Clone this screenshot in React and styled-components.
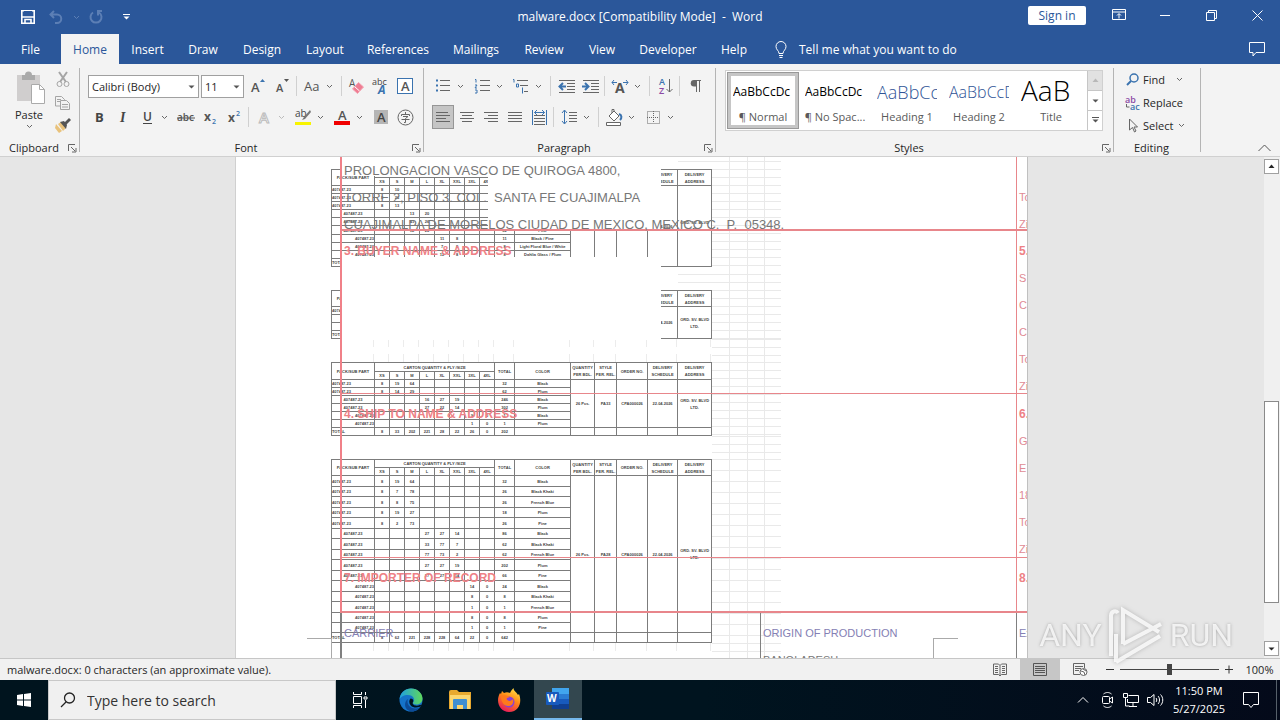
import React from "react";
import styled, { createGlobalStyle, css } from "styled-components";

const BLUE = "#2b579a";
const UI = `"Open Sans", "Noto Sans", sans-serif`;

const GlobalStyle = createGlobalStyle`
  * { box-sizing: border-box; }
  html, body { margin: 0; padding: 0; overflow: hidden; }
  body { font-family: ${UI}; font-size: 11px; color: #262626; }
  button, input, select { font: inherit; color: inherit; margin: 0; padding: 0; border: 0; background: none; }
  button { cursor: default; display: inline-flex; align-items: center; justify-content: center; }
  svg { display: block; flex: none; overflow: visible; }
`;

const App_ = styled.div`
  display: flex;
  flex-direction: column;
  height: 100vh;
  min-width: 1230px;
`;

/* ---------- title bar ---------- */
const TitleBar = styled.header`
  display: grid;
  grid-template-columns: 1fr auto 1fr;
  height: 34px;
  background: ${BLUE};
  color: #fff;
`;
const QuickAccess = styled.div`
  display: flex;
  align-items: center;
  padding-left: 16px;
`;
const QuickButton = styled.button`
  width: ${(p) => p.$w}px;
  height: 24px;
  color: ${(p) => (p.$dim ? "#5c7fb5" : "#fff")};
`;
const Title = styled.h1`
  margin: 0;
  font-size: 12px;
  font-weight: 400;
  line-height: 34px;
  white-space: pre;
`;
const WindowControls = styled.div`
  display: flex;
  justify-content: flex-end;
  height: 30px;
`;
const SignIn = styled.button`
  width: 58px;
  height: 19px;
  margin: 6px 10px 0 0;
  border-radius: 2px;
  background: #fff;
  color: ${BLUE};
  font-size: 12px;
`;
const WindowButton = styled.button`
  width: 46px;
  height: 30px;
  color: #fff;
`;

/* ---------- tabs ---------- */
const TabBar = styled.nav`
  display: flex;
  height: 30px;
  background: ${BLUE};
  color: #fff;
  font-size: 12px;
`;
const Tab = styled.button`
  width: ${(p) => p.$w}px;
  height: 30px;
  ${(p) => p.$active && css`background: #f3f3f3; color: ${BLUE};`}
`;
const TellMe = styled.button`
  gap: 12px;
  padding-left: 15px;
`;
const CommentButton = styled.button`
  width: 46px;
  margin-left: auto;
`;

/* ---------- ribbon ---------- */
const Ribbon = styled.section`
  display: flex;
  height: 93px;
  padding: 4px 0 0;
  background: #f3f3f3;
  border-bottom: 1px solid #d0d0d0;
`;
const Group = styled.div`
  display: flex;
  flex-direction: column;
  width: ${(p) => p.$w}px;
  height: 88px;
  background: linear-gradient(#b4b4b4 0 0) right top / 1px 84px no-repeat;
`;
const GroupBody = styled.div`
  display: flex;
  flex-direction: ${(p) => (p.$row ? "row" : "column")};
  gap: ${(p) => p.$gap || 0}px;
  flex: 1;
  padding: ${(p) => p.$pad};
`;
const GroupFoot = styled.div`
  display: grid;
  grid-template-columns: 4px 1fr 16px;
  height: 16px;
  align-items: center;
  text-align: center;
  font-size: 11px;
  line-height: 16px;
`;
const FootLabel = styled.span`
  grid-column: 2;
`;
const ToolRow = styled.div`
  display: flex;
  align-items: center;
  height: 24px;
`;
const Tool = styled.button`
  width: 24px;
  height: 24px;
  flex: none;
  ${(p) => p.$on && css`background: #c5c5c5; border: 1px solid #969696; width: 22px; height: 24px; margin: 0 1px;`}
`;
const CaretButton = styled.button`
  width: ${(p) => p.$w || 15}px;
  height: 24px;
  padding-right: 4px;
  flex: none;
`;
const Divider = styled.span`
  width: 1px;
  height: 20px;
  margin: 0 3px 0 2px;
  background: #d0d0d0;
`;
const PasteButton = styled.button`
  flex-direction: column;
  justify-content: flex-start;
  width: 56px;
  line-height: 18px;
  padding-top: 2px;
`;
const ClipColumn = styled.div`
  display: flex;
  flex-direction: column;
  margin-left: -2px;
`;
const ClipButton = styled.button`
  width: 16px;
  height: 23px;
`;
const Combo = styled.label`
  position: relative;
  display: flex;
  width: ${(p) => p.$w}px;
  height: 23px;
  margin: 0 ${(p) => p.$mr}px 0 1px;
  border: 1px solid #a0a0a0;
  background: #fff;
  select {
    flex: 1;
    min-width: 0;
    padding-left: 3px;
    appearance: none;
    font-size: 11px;
    outline: 0;
  }
  svg {
    position: absolute;
    right: 3px;
    top: 7px;
    color: #555;
    pointer-events: none;
  }
`;
const Gallery = styled.div`
  display: flex;
  width: 378px;
  height: 61px;
  padding-left: 1px;
  border: 1px solid #d0d0d0;
  background: #fff;
`;
const StyleCard = styled.button`
  flex-direction: column;
  justify-content: flex-start;
  width: 72px;
  height: 57px;
  margin-top: 1px;
  outline: ${(p) => (p.$on ? "1px solid #999" : "0")};
  outline-offset: -1px;
  box-shadow: ${(p) => (p.$on ? "inset 0 0 0 4px #c6c6c6" : "none")};
`;
const Sample = styled.span`
  width: 60px;
  height: 34px;
  margin-top: 2px;
  overflow: hidden;
  line-height: ${(p) => (p.$size > 20 ? 32 : 36)}px;
  white-space: nowrap;
  text-align: left;
  font-size: ${(p) => p.$size}px;
  font-weight: ${(p) => (p.$size > 12 ? 300 : 400)};
  color: ${(p) => p.$color};
`;
const StyleName = styled.span`
  color: #5a5a5a;
  font-size: 11px;
  line-height: 18px;
  white-space: nowrap;
`;
const GalleryScroll = styled.div`
  display: flex;
  flex-direction: column;
  width: 15px;
  margin-left: auto;
  border-left: 1px solid #c6c6c6;
`;
const ScrollStep = styled.button`
  flex: 1;
  background: ${(p) => (p.$off ? "#e1e1e1" : "#fff")};
  color: ${(p) => (p.$off ? "#b8b8b8" : "#555")};
  & + & { border-top: 1px solid #c6c6c6; }
`;
const EditButton = styled.button`
  justify-content: flex-start;
  gap: 3px;
  height: 23px;
  font-size: 11px;
  svg + svg, svg:last-child { margin-left: ${(p) => p.$gap || 0}px; }
`;
const Collapse = styled.button`
  width: 32px;
  height: 16px;
  margin: 72px 0 0 auto;
`;

/* ---------- document ---------- */
const Workspace = styled.main`
  display: flex;
  flex: 1;
  min-height: 0;
  background: #e6e6e6;
`;
const Desk = styled.div`
  display: flex;
  justify-content: center;
  flex: 1;
  padding-right: 1px;
  overflow: hidden;
`;
const Paper = styled.article`
  position: relative;
  width: 793px;
  padding-left: 95px;
  overflow: hidden;
  background: #fff;
  border-left: 1px solid #d0d0d0;
  border-right: 1px solid #c0c0c0;
`;
const Strip = styled.div`
  width: ${(p) => p.$w || 69}px;
  margin-left: auto;
  background-image: linear-gradient(#e9e9e9 0 0), linear-gradient(#e9e9e9 0 0), linear-gradient(#e9e9e9 0 0),
    repeating-linear-gradient(to bottom, #e9e9e9 0 1px, transparent 1px ${(p) => p.$step || 8}px);
  background-size: 1px 100%, 1px 100%, 1px 100%, 100% 100%;
  background-position: right 51px top 0, right 33px top 0, right 16px top 0, 0 ${(p) => p.$shift || 0}px;
  background-repeat: no-repeat;
`;
const Block = styled.div`
  display: flex;
  width: 450px;
  min-height: ${(p) => p.$h || 0}px;
`;
const Sheet = styled.table`
  width: 381px;
  table-layout: fixed;
  border-collapse: collapse;
  font: bold 4px "Liberation Sans", Arial, sans-serif;
  color: #444;
  text-align: center;
  th, td {
    padding: 0;
    border: 1px solid #7c7c7c;
    line-height: 7px;
    white-space: nowrap;
    overflow: hidden;
    font-weight: bold;
  }
`;
const SheetRow = styled.tr`
  height: ${(p) => p.$h}px;
`;
const PartCell = styled.td`
  text-align: ${(p) => p.$align};
`;
const Ticks = styled.div`
  display: flex;
  width: 381px;
`;
const Tick = styled.span`
  width: ${(p) => p.$w}px;
  flex: none;
  background: linear-gradient(#ececec 0 8px, transparent 8px 15px, #ececec 15px) right top / 1px 100% no-repeat;
`;
const Mask = styled.div`
  position: absolute;
  left: ${(p) => p.$x}px;
  top: ${(p) => p.$y}px;
  width: ${(p) => p.$w}px;
  height: ${(p) => p.$h}px;
  background: #fff;
`;
const Form = styled.div`
  position: absolute;
  inset: 0 0 0 104px;
  font-family: "Liberation Sans", Arial, sans-serif;
  white-space: pre;
`;
const FormRow = styled.div`
  display: grid;
  grid-template-columns: ${(p) => p.$cols || "674px 1fr"};
  height: ${(p) => p.$h}px;
  border-left: 2px solid ${(p) => (p.$dark ? "#808080" : "#f08088")};
  border-bottom: ${(p) => (p.$dark ? 0 : p.$line)}px solid #e8868b;
`;
const Field = styled.div`
  height: 0;
  min-height: 100%;
  padding: ${(p) => p.$top}px 0 0 2px;
  line-height: 27px;
  border-left: ${(p) => (p.$edge ? `1px solid ${p.$edge}` : "0")};
`;
const Line = styled.div`
  height: 27px;
  font-size: ${(p) => p.$size || 11}px;
  color: ${(p) => p.$color || "#e08a94"};
`;
const Heading = styled(Line)`
  font-size: 12px;
  font-weight: bold;
  color: #ee8186;
`;
const CropMark = styled.span`
  position: absolute;
  top: 481px;
  left: ${(p) => p.$x}px;
  width: 25px;
  height: 30px;
  border-top: 1px solid #aaa;
  border-${(p) => p.$side}: 1px solid #aaa;
`;
const ScrollBar = styled.div`
  display: flex;
  flex-direction: column;
  width: 16px;
  padding: 2px 1px 2px 0;
  background: #f0f0f0;
`;
const ScrollEnd = styled.button`
  height: 15px;
  background: #fff;
  border: 1px solid #a0a0a0;
`;
const ScrollTrack = styled.div`
  display: flex;
  flex-direction: column;
  flex: 1;
`;
const ScrollThumb = styled.div`
  flex: 201;
  background: #fff;
  border: 1px solid #8a8a8a;
`;
const ScrollSpace = styled.div`
  flex: ${(p) => p.$f};
`;

/* ---------- status bar ---------- */
const StatusBar = styled.footer`
  display: flex;
  align-items: center;
  height: 22px;
  padding-left: 7px;
  background: #f1f1f1;
  border-top: 1px solid #c6c6c6;
  font-size: 11px;
`;
const StatusRight = styled.div`
  display: flex;
  align-items: center;
  height: 21px;
  margin-left: auto;
`;
const ViewButton = styled.button`
  width: 40px;
  height: 21px;
  background: ${(p) => (p.$on ? "#c6c6c6" : "transparent")};
`;
const ZoomStep = styled.button`
  width: 20px;
  height: 21px;
`;
const ZoomSlider = styled.input`
  appearance: none;
  width: 99px;
  height: 21px;
  background: linear-gradient(#444 0 0) center / 100% 1px no-repeat;
  &::-webkit-slider-thumb {
    appearance: none;
    width: 5px;
    height: 11px;
    background: #444;
  }
`;
const ZoomValue = styled.button`
  width: 41px;
  height: 21px;
`;

/* ---------- taskbar ---------- */
const TaskBar = styled.footer`
  display: flex;
  height: 40px;
  background: linear-gradient(90deg, #00141e 0%, #00141f 55%, #040a1a 100%);
  color: #fff;
`;
const TaskButton = styled.button`
  width: ${(p) => p.$w || 48}px;
  height: 40px;
  ${(p) => p.$on && css`background: #33474f; border-bottom: 2px solid #76b9ed;`}
`;
const SearchBox = styled.label`
  display: flex;
  align-items: center;
  gap: 11px;
  width: 288px;
  height: 40px;
  padding-left: 11px;
  background: #f0f0f0;
  border: 1px solid #c8c8c8;
  color: #222;
  input {
    flex: 1;
    min-width: 0;
    outline: 0;
    font-size: 14px;
  }
  input::placeholder { color: #333; opacity: 1; }
`;
const Tray = styled.div`
  display: flex;
  margin-left: auto;
`;
const Clock = styled.button`
  flex-direction: column;
  width: 64px;
  height: 40px;
  font-size: 11px;
  line-height: 18px;
`;
const ShowDesktop = styled.button`
  width: 4px;
  height: 40px;
  margin-left: 4px;
  border-left: 1px solid #56606a;
`;
const Watermark = styled.div`
  position: fixed;
  right: 47px;
  bottom: 54px;
  display: flex;
  align-items: center;
  gap: 5px;
  color: rgba(255, 255, 255, 0.8);
  font: 400 32px/52px Roboto, sans-serif;
  text-shadow: 0 0 3px rgba(110, 110, 110, 0.55);
  pointer-events: none;
  svg { filter: drop-shadow(0 0 2px rgba(110, 110, 110, 0.5)); }
`;

/* ---------- drawings ---------- */
const Svg = ({ w = 18, h = w, box, children, ...rest }) => (
  <svg width={w} height={h} viewBox={box || `0 0 ${w} ${h}`} fill="none" stroke="currentColor" aria-hidden="true" {...rest}>
    {children}
  </svg>
);
const Chevron = ({ c = "#666" }) => <Svg w={7} h={5} stroke={c}><path d="M1 1l2.5 2.5L6 1" /></Svg>;
const Caret = ({ label, w, c }) => <CaretButton $w={w} aria-label={label}><Chevron c={c} /></CaretButton>;
const Triangle = ({ up, bar }) => (
  <Svg w={7} h={7} stroke="none" fill="currentColor">
    {bar && <path d="M0 0h7v1H0z" />}
    <path d={up ? "M3.5 1.5L6.5 5h-6z" : "M.5 2.5h6l-3 3z"} />
  </Svg>
);
const G = "#666";
const B = "#3b73af";
const glyph = { stroke: "none", fontFamily: "Open Sans, sans-serif" };
const lines = (xs, step = 4, y0 = 3) => xs.map(([a, b], i) => <path key={i} d={`M${a} ${y0 + i * step + 0.5}H${b}`} />);

const icons = {
  grow: <Svg w={16}><text x="1" y="14" fontSize="13" fontWeight="600" fill="#555" {...glyph}>A</text><path d="M10 4l2.500-3 2.500 3z" fill={B} stroke="none" /></Svg>,
  shrink: <Svg w={16}><text x="2" y="14" fontSize="11" fontWeight="600" fill="#555" {...glyph}>A</text><path d="M10 1h5l-2.500 3z" fill="#555" stroke="none" /></Svg>,
  aa: <Svg w={18}><text x="1" y="14" fontSize="13" fill="#555" {...glyph}>Aa</text></Svg>,
  clear: <Svg w={18}><text x="1" y="10" fontSize="10" fill="#555" {...glyph}>A</text><path d="M4.500 12l6-6.500 5 4.500-6 6.500z" fill="#ef7d93" stroke="#f3a3b2" /><path d="M6.500 9.500l5 4.500" stroke="#fff" /></Svg>,
  phonetic: <Svg w={18} h={20}><text x="0" y="9" fontSize="9" fill="#444" {...glyph}>abc</text><text x="6" y="18" fontSize="12" fontWeight="700" fontStyle="italic" fill={B} {...glyph}>A</text></Svg>,
  boxA: <Svg w={16}><rect x=".5" y=".5" width="15" height="15" fill="#fff" stroke={B} /><text x="4" y="13" fontSize="13" fontWeight="600" fill="#555" {...glyph}>A</text></Svg>,
  bold: <Svg w={16}><text x="4" y="13" fontSize="13" fontWeight="700" fill="#444" {...glyph}>B</text></Svg>,
  italic: <Svg w={16}><text x="5" y="13" fontSize="14" fontStyle="italic" fontWeight="700" fill="#444" stroke="none" fontFamily="Liberation Serif, serif">I</text></Svg>,
  underline: <Svg w={16}><text x="4" y="12" fontSize="12" fontWeight="600" fill="#444" {...glyph}>U</text><path d="M4 14.500h9" stroke="#444" /></Svg>,
  strike: <Svg w={18} h={16}><text x="0" y="12" fontSize="10" fontWeight="600" fill="#555" {...glyph}>abc</text><path d="M0 9h18" stroke="#555" /></Svg>,
  sub: <Svg w={16}><text x="2" y="12" fontSize="12" fontWeight="700" fill="#555" {...glyph}>x</text><text x="10" y="15" fontSize="7" fontWeight="600" fill={B} {...glyph}>2</text></Svg>,
  sup: <Svg w={16}><text x="2" y="13" fontSize="12" fontWeight="700" fill="#555" {...glyph}>x</text><text x="10" y="7" fontSize="7" fontWeight="600" fill={B} {...glyph}>2</text></Svg>,
  effect: <Svg w={16}><text x="3" y="14" fontSize="15" fontWeight="600" fill="#fff" stroke="#bbb" fontFamily="Open Sans, sans-serif">A</text></Svg>,
  highlight: <Svg w={18} h={18}><text x="1" y="9" fontSize="10" fill="#444" {...glyph}>ab</text><path d="M16 2l-6 7-2 3 3-1 6-7z" fill="#777" stroke="none" /><path d="M1 14h16v3H1z" fill="#f8f400" stroke="none" /></Svg>,
  color: <Svg w={18} h={18}><text x="5" y="12" fontSize="13" fontWeight="600" fill="#555" {...glyph}>A</text><path d="M1 13h16v4H1z" fill="#f00000" stroke="none" /></Svg>,
  shade: <Svg w={16}><path d="M1 1h14v14H1z" fill="#b5b5b5" stroke="none" /><text x="4" y="13" fontSize="13" fontWeight="600" fill="#444" {...glyph}>A</text></Svg>,
  circle: <Svg w={17} h={17}><circle cx="8.500" cy="8.500" r="7.500" stroke={G} /><path d="M8.500 3v2M4.500 7V5.500h8V7M6 7.500h5L8.500 9.500v4h-1.500M4.500 10.500h8" stroke={G} /></Svg>,
  bullets: <Svg w={16} stroke={G}>{lines([[5, 15], [5, 15], [5, 15]], 5, 2)}<path d="M1 1.500h2v2H1zM1 6.500h2v2H1zM1 11.500h2v2H1z" fill={B} stroke="none" /></Svg>,
  numbers: <Svg w={16} stroke={G}>{lines([[6, 16], [6, 16], [6, 16]], 5, 2)}<path d="M1 1.500h1v3M1 7h2l-2 3h2M1 12h2v3H1" stroke={B} /></Svg>,
  multilevel: <Svg w={18} h={16} stroke={G}><path d="M5 2.500h11M8 7.500h8M12 13.500h4" /><path d="M1 1.500h1v3M4.500 6h2v3h-2zM10.500 9.500v6" stroke={B} /></Svg>,
  outdent: <Svg w={17} h={16} stroke={G}><path d="M1 2.500h16M9 5.500h8M9 8.500h8M9 11.500h8M1 14.500h16" /><path d="M8 8.500H2M5 5L1.500 8.500 5 12" stroke={B} strokeWidth="2" /></Svg>,
  indent: <Svg w={17} h={16} stroke={G}><path d="M1 2.500h16M9 5.500h8M9 8.500h8M9 11.500h8M1 14.500h16" /><path d="M0 8.500h6M3 5l3.500 3.500L3 12" stroke={B} strokeWidth="2" /></Svg>,
  asian: <Svg w={18} h={16}><text x="4" y="15" fontSize="14" fontWeight="700" fill="#555" {...glyph}>A</text><path d="M1 4.500h5M3 2L1 4.500 3 7M12 4.500h5M15 2l2 2.500L15 7" stroke={B} /></Svg>,
  sort: <Svg w={16} h={18}><text x="2" y="8" fontSize="9" fontWeight="600" fill={B} {...glyph}>A</text><text x="2" y="17" fontSize="9" fontWeight="600" fill="#8b4aa5" {...glyph}>Z</text><path d="M12.500 2v13M9.500 12l3 3 3-3" stroke={G} /></Svg>,
  pilcrow: <Svg w={14} h={16}><path d="M7 2.500h6M8.500 2v12M11.500 2v12" stroke={G} /><path d="M8 2H6a3 3 0 000 6.500h2z" fill={G} stroke="none" /></Svg>,
  left: <Svg w={16} stroke={G}>{lines([[1, 13], [1, 15], [1, 11], [1, 15]], 3, 3)}</Svg>,
  center: <Svg w={16} stroke={G}>{lines([[1, 15], [3, 13], [1, 15], [3, 13]], 3, 3)}</Svg>,
  right: <Svg w={16} stroke={G}>{lines([[1, 15], [5, 15], [1, 15], [5, 15]], 3, 3)}</Svg>,
  justify: <Svg w={16} stroke={G}>{lines([[1, 15], [1, 15], [1, 15], [1, 15]], 3, 3)}</Svg>,
  distribute: <Svg w={17} h={17} stroke={G}><path d="M3 6.500h11M3 9.500h11M3 12.500h11M3 15.500h11" /><path d="M1.500 1v15M15.500 1v15M3.500 3.500h10M6 1L3.500 3.500 6 6M11 1l2.500 2.500L11 6" stroke={B} /></Svg>,
  spacing: <Svg w={16} stroke={G}><path d="M8 3.500h8M8 6.500h8M8 9.500h8M8 12.500h8" /><path d="M3.500 1.500v13M1 4l2.500-3L6 4M1 12l2.500 3L6 12" stroke={B} /></Svg>,
  fill: <Svg w={18} h={18} stroke={G}><path d="M4 8l5-5 5 5-5 5zM7 5V1.500h2V4" fill="#fff" /><path d="M14 6c3 1 3 4 1 6" stroke={B} strokeWidth="2" /><path d="M1.500 14.500h14v3h-14z" fill="#fff" /></Svg>,
  borders: <Svg w={15} stroke={G} strokeDasharray="1 1"><path d="M1.500 1.500h12v12h-12zM7.500 1v12M1 7.500h12" /></Svg>,
};
const Launcher = ({ name }) => (
  <button aria-label={`${name} settings`}>
    <Svg w={9} stroke={G}><path d="M.5 7V.500H7M3 3l4 4M8 4v4H4" /></Svg>
  </button>
);
const T = ({ i, label, on }) => <Tool $on={on} aria-label={label}>{icons[i]}</Tool>;

const tabs = [["File", 61], ["Home", 58], ["Insert", 57], ["Draw", 54], ["Design", 64], ["Layout", 62], ["References", 84], ["Mailings", 72], ["Review", 64], ["View", 52], ["Developer", 80], ["Help", 52]];
const styleCards = [
  ["AaBbCcDc", "¶ Normal", 12, "#000"],
  ["AaBbCcDc", "¶ No Spac...", 12, "#000"],
  ["AaBbCc", "Heading 1", 18, "#2f5496"],
  ["AaBbCcD", "Heading 2", 16, "#2f5496"],
  ["AaB", "Title", 28, "#000"],
];

/* ---------- sheet data ---------- */
const colWidths = [43, 15, 15, 15, 15, 15, 15, 15, 15, 20, 56, 24, 22, 31, 30, 34];
const sizes = ["XS", "S", "M", "L", "XL", "XXL", "3XL", "4XL"];
const part = "407487.23";
const row = (align, at, values, total, color, label = part) => ({ align, at, values, total, color, label });
const sheets = [
  {
    head: [8, 8], heights: [8, 8, 8, 8, 8, 9, 8, 8, 8, 8], order: ["", "", "", "22.04.2026"],
    rows: [
      row("left", 0, [8, 10], 18, "Black"), row("left", 0, [8, 26], 34, "Plum"), row("left", 0, [8, 13], 21, "Pine"),
      row("center", 2, [13, 20], 33, "Black"), row("center", 2, [41, 26], 67, "Plum"), row("center", 2, [12, 20], 32, "Pine"),
      row("right", 4, [11, 8], 11, "Black / Pine"), row("right", 4, [7, 8], 8, "Light Floral Blue / White"), row("right", 4, [12, 8], 8, "Dahlia Glass / Plum"),
      row("left", 0, [], "", "", "TOTAL"),
    ],
  },
  {
    head: [8, 8], heights: [8, 8, 8, 8], order: ["", "", "", "22.04.2026"],
    rows: [row("left", 0, [], "", ""), row("left", 0, [], "", "", ""), row("left", 0, [], "", "", ""), row("left", 0, [], "", "", "TOTAL")],
  },
  {
    head: [9, 8], heights: [8, 8, 8, 8, 8, 8, 8], order: ["26 Pcs.", "PA33", "CPA000026", "22.04.2026"], foot: true,
    rows: [
      row("left", 0, [8, 19, 64], 32, "Black"), row("left", 0, [8, 14, 29], 62, "Plum"),
      row("center", 3, [16, 27, 19], 246, "Black"), row("center", 3, [27, 22, 14], 302, "Plum"),
      row("right", 6, [9, 0], 1, "Black"), row("right", 6, [1, 0], 1, "Plum"),
      row("left", 0, [8, 33, 202, 221, 28, 22, 26, 0], 202, "", "TOTAL"),
    ],
  },
  {
    head: [8, 8], heights: [11, 10, 11, 10, 11, 10, 11, 10, 11, 10, 11, 10, 11, 10, 10, 10], order: ["26 Pcs.", "PA28", "CPA000026", "22.04.2026"], foot: true,
    rows: [
      row("left", 0, [8, 19, 64], 32, "Black"), row("left", 0, [8, 7, 78], 26, "Black Khaki"), row("left", 0, [8, 8, 75], 26, "French Blue"),
      row("left", 0, [8, 19, 27], 18, "Plum"), row("left", 0, [8, 2, 73], 26, "Pine"),
      row("center", 3, [27, 27, 14], 86, "Black"), row("center", 3, [33, 77, 7], 62, "Black Khaki"), row("center", 3, [77, 73, 2], 62, "French Blue"),
      row("center", 3, [27, 27, 19], 202, "Plum"), row("center", 3, [27, 27, 14], 66, "Pine"),
      row("right", 6, [14, 0], 24, "Black"), row("right", 6, [8, 0], 8, "Black Khaki"), row("right", 6, [1, 0], 1, "French Blue"),
      row("right", 6, [8, 0], 8, "Plum"), row("right", 6, [1, 0], 1, "Pine"),
      row("left", 0, [8, 62, 221, 228, 228, 64, 22, 0], 642, "", "TOTAL"),
    ],
  },
];

function PackingSheet({ data }) {
  const span = data.foot ? data.rows.length - 1 : data.rows.length;
  return (
    <Sheet>
      <colgroup>{colWidths.map((w, i) => <col key={i} width={w} />)}</colgroup>
      <thead>
        <SheetRow $h={data.head[0]}>
          <th rowSpan={2}>PACK/SUB PART</th>
          <th colSpan={8}>CARTON QUANTITY &amp; PLY /SIZE</th>
          <th rowSpan={2}>TOTAL</th>
          <th rowSpan={2}>COLOR</th>
          <th rowSpan={2}>QUANTITY<br />PER BDL.</th>
          <th rowSpan={2}>STYLE<br />PER. REL.</th>
          <th rowSpan={2}>ORDER NO.</th>
          <th rowSpan={2}>DELIVERY<br />SCHEDULE</th>
          <th rowSpan={2}>DELIVERY<br />ADDRESS</th>
        </SheetRow>
        <SheetRow $h={data.head[1]}>{sizes.map((s) => <th key={s}>{s}</th>)}</SheetRow>
      </thead>
      <tbody>
        {data.rows.map((r, i) => (
          <SheetRow key={i} $h={data.heights[i]}>
            <PartCell $align={r.align}>{r.label}</PartCell>
            {sizes.map((s, k) => <td key={s}>{r.values[k - r.at]}</td>)}
            <td>{r.total}</td>
            <td>{r.color}</td>
            {i === 0 && data.order.map((o, k) => <td key={k} rowSpan={span}>{o}</td>)}
            {i === 0 && <td rowSpan={span}>ORD. SV. BLVD<br />LTD.</td>}
            {data.foot && i === span && [0, 1, 2, 3, 4].map((k) => <td key={k} />)}
          </SheetRow>
        ))}
      </tbody>
    </Sheet>
  );
}
const TickRow = () => <Ticks>{colWidths.map((w, i) => <Tick key={i} $w={w} />)}</Ticks>;

const RED = "#e8868b";
const VIOLET = "#8480b4";

function Document() {
  return (
    <Paper>
      <Block $h={12}><Strip $w={103} $shift={4} /></Block>
      <Block><PackingSheet data={sheets[0]} /><Strip /></Block>
      <Block $h={23}><Strip $w={103} $shift={-1} /></Block>
      <Block><PackingSheet data={sheets[1]} /><Strip /></Block>
      <Block $h={23}><TickRow /><Strip $w={69} /></Block>
      <Block><PackingSheet data={sheets[2]} /><Strip /></Block>
      <Block $h={23}><Strip /></Block>
      <Block><PackingSheet data={sheets[3]} /><Strip $step={11} /></Block>
      <Block $h={23}><TickRow /><Strip /></Block>
      <Mask $x={105} $y={0} $w={320} $h={19} />
      <Mask $x={252} $y={19} $w={173} $h={54} />
      <Mask $x={105} $y={100} $w={320} $h={83} />
      <CropMark $x={71} $side="right" />
      <CropMark $x={697} $side="left" />
      <Form>
        <FormRow $h={74} $line={2}>
          <Field $top={0}>
            <Line $size={13} $color="#777">PROLONGACION VASCO DE QUIROGA 4800,</Line>
            <Line $size={13} $color="#777">{"TORRE 2, PISO 3. COL.  SANTA FE CUAJIMALPA"}</Line>
            <Line $size={13} $color="#777">{"CUAJIMALPA DE MORELOS CIUDAD DE MEXICO, MEXICO C.  P.  05348."}</Line>
          </Field>
          <Field $top={27} $edge={RED}><Line>To</Line><Line>Zi</Line></Field>
        </FormRow>
        <FormRow $h={163} $line={1}>
          <Field $top={7}><Heading>3. BUYER NAME &amp; ADDRESS</Heading></Field>
          <Field $top={7} $edge={RED}><Heading>5.</Heading><Line>S</Line><Line>C</Line><Line>C</Line><Line>To</Line><Line>Zi</Line></Field>
        </FormRow>
        <FormRow $h={164} $line={1}>
          <Field $top={7}><Heading>4. SHIP TO NAME &amp; ADDRESS</Heading></Field>
          <Field $top={7} $edge={RED}><Heading>6.</Heading><Line>G</Line><Line>E</Line><Line>18</Line><Line>To</Line><Line>Zi</Line></Field>
        </FormRow>
        <FormRow $h={55} $line={2}>
          <Field $top={7}><Heading>7. IMPORTER OF RECORD</Heading></Field>
          <Field $top={7} $edge={RED}><Heading>8.</Heading></Field>
        </FormRow>
        <FormRow $h={60} $dark $cols="418px 256px 1fr">
          <Field $top={7}><Line $color={VIOLET}>CARRIER</Line></Field>
          <Field $top={7} $edge="#808080"><Line $color={VIOLET}>ORIGIN OF PRODUCTION</Line><Line $color="#777">BANGLADESH</Line></Field>
          <Field $top={7} $edge="#808080"><Line $color={VIOLET}>Ex</Line></Field>
        </FormRow>
      </Form>
    </Paper>
  );
}

export default function App() {
  return (
    <App_>
      <GlobalStyle />
      <TitleBar>
        <QuickAccess>
          <QuickButton $w={24} aria-label="Save"><Svg w={14}><path d="M.8.8h12.400v12.400H.8z" strokeWidth="1.600" /><path d="M3 1h8v5H3z" fill={BLUE} stroke="none" /><path d="M1 7h12M4 13V9.500h6V13" strokeWidth="1.600" /></Svg></QuickButton>
          <QuickButton $w={32} $dim aria-label="Undo"><Svg w={14}><path d="M5 1L1.500 4.500 5 8M2 4.500h6a4 4 0 010 8.500H6" strokeWidth="2" /></Svg></QuickButton>
          <QuickButton $w={8} $dim aria-label="Undo list"><Chevron c="#5c7fb5" /></QuickButton>
          <QuickButton $w={32} $dim aria-label="Repeat"><Svg w={14}><path d="M4 2.500a5.500 5.500 0 106 0M13 1H9v4.500" strokeWidth="2" /></Svg></QuickButton>
          <QuickButton $w={28} aria-label="Customize quick access toolbar"><Triangle bar /></QuickButton>
        </QuickAccess>
        <Title>{"malware.docx [Compatibility Mode]  -  Word"}</Title>
        <WindowControls>
          <SignIn>Sign in</SignIn>
          <WindowButton aria-label="Ribbon display options"><Svg w={14} h={12}><path d="M.5.500h13v10H.500zM.5 3h13M7 9.500V5M5 6.500L7 4.500l2 2" /></Svg></WindowButton>
          <WindowButton aria-label="Minimize"><Svg w={10}><path d="M0 5.500h10" /></Svg></WindowButton>
          <WindowButton aria-label="Restore"><Svg w={11}><path d="M.5 2.500h8v8h-8zM2.500 2.500v-2h8v8h-2" /></Svg></WindowButton>
          <WindowButton aria-label="Close"><Svg w={11}><path d="M.5.500l10 10M10.500.500l-10 10" /></Svg></WindowButton>
        </WindowControls>
      </TitleBar>
      <TabBar>
        {tabs.map(([name, w]) => <Tab key={name} $w={w} $active={name === "Home"}>{name}</Tab>)}
        <TellMe>
          <Svg w={12} h={17}><path d="M4 12.500c0-3-3-3.500-3-7a5 5 0 0110 0c0 3.500-3 4-3 7zM4 14.500h4M4.500 16.500h3" /></Svg>
          Tell me what you want to do
        </TellMe>
        <CommentButton aria-label="Comments"><Svg w={17} h={15}><path d="M.5.500h15v10H7l-3 3.500v-3.500H.500z" /></Svg></CommentButton>
      </TabBar>
      <Ribbon>
        <Group $w={80}>
          <GroupBody $row $pad="0 0 0 1px">
            <PasteButton>
              <Svg w={32} h={36} stroke="none"><path d="M4 5h23v26H4z" fill="#d0cece" /><path d="M9 5h3a3.500 3.500 0 017 0h3v5H9z" fill="#aaa" /><path d="M18.500 14.500h8l5 5v14h-13z" fill="#fff" stroke="#aaa" /><path d="M26.500 14.500v5h5" stroke="#aaa" /></Svg>
              Paste
              <Chevron />
            </PasteButton>
            <ClipColumn>
              <ClipButton aria-label="Cut"><Svg w={14} h={16} stroke="#a5a5a5"><path d="M3 0l7 10M11 0L4 10" strokeWidth="2" /><circle cx="3.500" cy="12" r="2.500" /><circle cx="10.500" cy="12" r="2.500" /></Svg></ClipButton>
              <ClipButton aria-label="Copy"><Svg w={16} h={14} stroke="#a5a5a5"><path d="M.5.500h6l3 3v6.500h-9zM2 3.500h4M2 5.500h4" /><path d="M5.500 4.500h6l3 3v6h-9z" fill="#f3f3f3" /><path d="M7 8.500h6M7 11h6" /></Svg></ClipButton>
              <ClipButton aria-label="Format painter"><Svg w={16} h={15} stroke="none"><path d="M1 6l6 7-3 2-4-5z" fill="#e9c27b" /><path d="M3 6l3-2 5 6-3 3z" fill="#e9c27b" /><path d="M5 4l4-1 3 4-1 4z" fill="#555" /><path d="M9 5l5-5 2 2-5 5z" fill="#555" /></Svg></ClipButton>
            </ClipColumn>
          </GroupBody>
          <GroupFoot><FootLabel>Clipboard</FootLabel><Launcher name="Clipboard" /></GroupFoot>
        </Group>
        <Group $w={344}>
          <GroupBody $gap={7} $pad="6px 0 0 7px">
            <ToolRow>
              <Combo $w={111} $mr={1}><select aria-label="Font" defaultValue="a"><option value="a">Calibri (Body)</option></select><Triangle /></Combo>
              <Combo $w={43} $mr={2}><select aria-label="Font size" defaultValue="11"><option>11</option></select><Triangle /></Combo>
              <T i="grow" label="Grow font" /><T i="shrink" label="Shrink font" /><Divider />
              <T i="aa" label="Change case" /><Caret label="Case options" /><Divider />
              <T i="clear" label="Clear formatting" /><T i="phonetic" label="Phonetic guide" /><T i="boxA" label="Character border" />
            </ToolRow>
            <ToolRow>
              <T i="bold" label="Bold" /><T i="italic" label="Italic" /><T i="underline" label="Underline" /><Caret label="Underline options" />
              <T i="strike" label="Strikethrough" /><T i="sub" label="Subscript" /><T i="sup" label="Superscript" /><Divider />
              <T i="effect" label="Text effects" /><Caret label="Effect options" c="#bbb" /><T i="highlight" label="Highlight" /><Caret label="Highlight options" />
              <T i="color" label="Font color" /><Caret label="Color options" /><T i="shade" label="Character shading" /><T i="circle" label="Enclose characters" />
            </ToolRow>
          </GroupBody>
          <GroupFoot><FootLabel>Font</FootLabel><Launcher name="Font" /></GroupFoot>
        </Group>
        <Group $w={292}>
          <GroupBody $gap={7} $pad="6px 0 0 7px">
            <ToolRow>
              <T i="bullets" label="Bullets" /><Caret label="Bullet options" /><T i="numbers" label="Numbering" /><Caret label="Numbering options" />
              <T i="multilevel" label="Multilevel list" /><Caret label="Multilevel options" /><Divider />
              <T i="outdent" label="Decrease indent" /><T i="indent" label="Increase indent" /><Divider />
              <T i="asian" label="Asian layout" /><Caret label="Layout options" /><Divider />
              <T i="sort" label="Sort" /><Divider /><T i="pilcrow" label="Show marks" />
            </ToolRow>
            <ToolRow>
              <T i="left" label="Align left" on /><T i="center" label="Center" /><T i="right" label="Align right" /><T i="justify" label="Justify" /><T i="distribute" label="Distribute" /><Divider />
              <T i="spacing" label="Line spacing" /><Caret label="Spacing options" /><Divider />
              <T i="fill" label="Shading" /><Caret label="Shading options" /><T i="borders" label="Borders" /><Caret label="Border options" />
            </ToolRow>
          </GroupBody>
          <GroupFoot><FootLabel>Paragraph</FootLabel><Launcher name="Paragraph" /></GroupFoot>
        </Group>
        <Group $w={398}>
          <GroupBody $pad="2px 0 0 9px">
            <Gallery>
              {styleCards.map(([sample, name, size, color], i) => (
                <StyleCard key={name} $on={i === 0}>
                  <Sample $size={size} $color={color}>{sample}</Sample>
                  <StyleName>{name}</StyleName>
                </StyleCard>
              ))}
              <GalleryScroll>
                <ScrollStep $off aria-label="Previous styles"><Triangle up /></ScrollStep>
                <ScrollStep aria-label="Next styles"><Triangle /></ScrollStep>
                <ScrollStep aria-label="All styles"><Triangle bar /></ScrollStep>
              </GalleryScroll>
            </Gallery>
          </GroupBody>
          <GroupFoot><FootLabel>Styles</FootLabel><Launcher name="Styles" /></GroupFoot>
        </Group>
        <Group $w={87}>
          <GroupBody $pad="0 0 0 11px">
            <EditButton $gap={8}><Svg w={15}><circle cx="9" cy="6" r="4" stroke={B} strokeWidth="1.500" /><path d="M6 9l-4 4" stroke={B} strokeWidth="2" /></Svg>Find<Chevron /></EditButton>
            <EditButton><Svg w={15} h={16}><text x="0" y="8" fontSize="9" fontWeight="600" fill="#8b4aa5" {...glyph}>ab</text><text x="5" y="15" fontSize="9" fontWeight="600" fill={B} {...glyph}>ac</text><path d="M1.500 9v3h3" stroke={G} /></Svg>Replace</EditButton>
            <EditButton $gap={2}><Svg w={15}><path d="M4.500 1v11l3-2.500 2 4.500 1.500-1-2-4h3.500z" stroke={G} /></Svg>Select<Chevron /></EditButton>
          </GroupBody>
          <GroupFoot><FootLabel>Editing</FootLabel></GroupFoot>
        </Group>
        <Collapse aria-label="Collapse the ribbon"><Svg w={13} h={8} stroke="#555"><path d="M.5 7l6-6 6 6" /></Svg></Collapse>
      </Ribbon>
      <Workspace>
        <Desk><Document /></Desk>
        <ScrollBar>
          <ScrollEnd aria-label="Scroll up"><Triangle up /></ScrollEnd>
          <ScrollTrack><ScrollSpace $f={228} /><ScrollThumb /><ScrollSpace $f={38} /></ScrollTrack>
          <ScrollEnd aria-label="Scroll down"><Triangle /></ScrollEnd>
        </ScrollBar>
      </Workspace>
      <StatusBar>
        malware.docx: 0 characters (an approximate value).
        <StatusRight>
          <ViewButton aria-label="Read mode"><Svg w={14} h={13} stroke={G}><path d="M7 2.500L5.500 1H.500v10.500H5.500L7 13l1.500-1.500h5V1h-5zM7 2.500V13M2 3.500h3M2 5.500h3M2 7.500h3M2 9.500h3M9 3.500h3M9 5.500h3M9 7.500h3M9 9.500h3" /></Svg></ViewButton>
          <ViewButton $on aria-label="Print layout"><Svg w={14} h={13} stroke="#555"><path d="M.5.500h13v12H.500zM2 3.500h10M2 5.500h10M2 7.500h10M2 9.500h10" /></Svg></ViewButton>
          <ViewButton aria-label="Web layout"><Svg w={15} h={13} stroke={G}><path d="M11.500 5V.500H.500v11H7M2 3.500h8M2 5.500h6M2 7.500h4" /><circle cx="10.500" cy="9" r="3.500" fill="#fff" /><path d="M8 8l3 1 1 3M10 6l3 2" /></Svg></ViewButton>
          <ZoomStep aria-label="Zoom out"><Svg w={9} stroke="#333"><path d="M0 4.500h8" /></Svg></ZoomStep>
          <ZoomSlider type="range" min="0" max="100" defaultValue="50" aria-label="Zoom" />
          <ZoomStep aria-label="Zoom in"><Svg w={9} stroke="#333"><path d="M0 4.500h8M4 .500v8" /></Svg></ZoomStep>
          <ZoomValue>100%</ZoomValue>
        </StatusRight>
      </StatusBar>
      <TaskBar>
        <TaskButton aria-label="Start"><Svg w={14} stroke="none" fill="#fff"><path d="M0 2l6-1v5.500H0zM7 .900L14 0v6.500H7zM0 7.500h6V13l-6-1zM7 7.500h7V14l-7-1z" /></Svg></TaskButton>
        <SearchBox>
          <Svg w={16}><circle cx="9.500" cy="6" r="5" strokeWidth="1.300" /><path d="M6 10l-5 5" strokeWidth="1.300" /></Svg>
          <input type="search" placeholder="Type here to search" aria-label="Search" />
        </SearchBox>
        <TaskButton aria-label="Task view"><Svg w={16}><path d="M1.500 0v2.500h8V0M1.500 16v-2.500h8V16M1.500 4.500h8v7h-8zM13.500 0v3M13.500 8v8M12 5h3v2h-3z" /></Svg></TaskButton>
        <TaskButton $w={53} aria-label="Edge">
          <Svg w={24} stroke="none">
            <defs><linearGradient id="edge" x1="0" y1="0" x2="1" y2="0"><stop offset="0" stopColor="#1f9fe0" /><stop offset="1" stopColor="#5fd85c" /></linearGradient></defs>
            <circle cx="12" cy="12" r="11.500" fill="#1573c9" />
            <path d="M.5 11.500C1.500 4 6.500.5 12 .5 19 .5 23.500 5.500 23.500 10.500c0 3.500-2.500 6-6 6-2.500 0-3.800-1-3.500-2 1-1 1.300-2 1-3.500C14.500 8.500 12 7 8.800 7 4.800 7 1.500 9 .5 11.500z" fill="url(#edge)" />
            <path d="M9 11c-2 5 2 10 8.500 9.500 1.500 0 3-.8 4-1.500C19 23 14 24.500 9.500 22.500 5 20 5 13.500 9 11z" fill="#0c4b97" />
            <path d="M11.500 10.500c2 0 3 1.200 2.800 2.700-.3 1.300-1.300 1.800 0 3.300 1.500 1.500 4.500 1.500 7 .3l1 1c-2 2-8 2.700-10.500-.3-2-2.300-2-5.500-.3-7z" fill="#00141e" />
          </Svg>
        </TaskButton>
        <TaskButton $w={46} aria-label="File explorer"><Svg w={22} h={20} stroke="none"><path d="M0 2q0-2 2-2h6l2 2h12v17H0z" fill="#e8a92f" /><path d="M1 5h20v14H1z" fill="#fcd66f" /><path d="M4 10q0-1 1-1h12q1 0 1 1v9h-4v-4H8v4H4z" fill="#3f8fd2" /></Svg></TaskButton>
        <TaskButton $w={51} aria-label="Firefox">
          <Svg w={24} stroke="none">
            <defs><linearGradient id="fox" x1=".8" y1="0" x2=".3" y2="1"><stop offset="0" stopColor="#ffe34a" /><stop offset=".45" stopColor="#ff8a16" /><stop offset="1" stopColor="#e8175d" /></linearGradient></defs>
            <path d="M3 5l1 1 1-3 2 2c2-1 4-1 6 0 1-2 2-3.500 3.500-5 0 3 3 4 4.500 7l1-1c3 7 1 18-10 18C3 24-2 14 3 5z" fill="url(#fox)" />
            <circle cx="12" cy="14" r="5.500" fill="#8a3fd6" />
            <path d="M4 8c4-2 7 0 9 1-2 .5-3 1-3.500 2 2 3 5 2 6.500 0 1 4-1 7-5 7-4 0-7-4-7-10z" fill="#ff7a1c" />
          </Svg>
        </TaskButton>
        <TaskButton $w={48} $on aria-label="Word">
          <Svg w={24} h={22} stroke="none"><path d="M6 0h17v6H6z" fill="#41a5ee" /><path d="M6 6h17v5H6z" fill="#2b7cd3" /><path d="M6 11h17v5H6z" fill="#185abd" /><path d="M6 16h17v5H6z" fill="#103f91" /><rect x="0" y="4" width="13" height="13" rx="1" fill="#185abd" /><text x="1" y="14" fontSize="10" fontWeight="700" fill="#fff" {...glyph}>W</text></Svg>
        </TaskButton>
        <Tray>
          <TaskButton $w={24} aria-label="Hidden icons"><Svg w={12} h={8}><path d="M1 6.500l5-5 5 5" /></Svg></TaskButton>
          <TaskButton $w={24} aria-label="Camera"><Svg w={13} h={16}><path d="M2.500 2c2.500-2 5.500-2 8 0M2.500 14c2.500 2 5.500 2 8 0" /><rect x="1.500" y="4.500" width="7" height="7" rx="1" /><path d="M8.500 7l3-2v6l-3-2" /></Svg></TaskButton>
          <TaskButton $w={24} aria-label="Network"><Svg w={17} h={14}><path d="M5.500 2.500h10v7h-11V6M10 10v3M6 13.500h8M.500.500h4v4h-4zM2.500 5v8h4" /></Svg></TaskButton>
          <TaskButton $w={24} aria-label="Volume"><Svg w={17} h={14}><path d="M.500 4.500h3l3.500-3v11l-3.500-3h-3zM9 5c1 1 1 3 0 4M11 3c2 2 2 6 0 8M13.500 1.500c3 3 3 8 0 11" /></Svg></TaskButton>
          <Clock><span>11:50 PM</span><span>5/27/2025</span></Clock>
          <TaskButton $w={41} aria-label="Notifications"><Svg w={17} h={17}><path d="M.500.500h15v12h-5l-2.500 3-2.500-3h-5z" /></Svg></TaskButton>
          <ShowDesktop aria-label="Show desktop" />
        </Tray>
      </TaskBar>
      <Watermark>
        ANY
        <Svg w={58} h={62} stroke="rgba(255,255,255,.8)" strokeWidth="4"><path d="M16 40V6l36 22M16 40L54 20M4 52V12c0-5 5-6 7-3M9 58V30M9 58l44-26" /></Svg>
        RUN
      </Watermark>
    </App_>
  );
}
